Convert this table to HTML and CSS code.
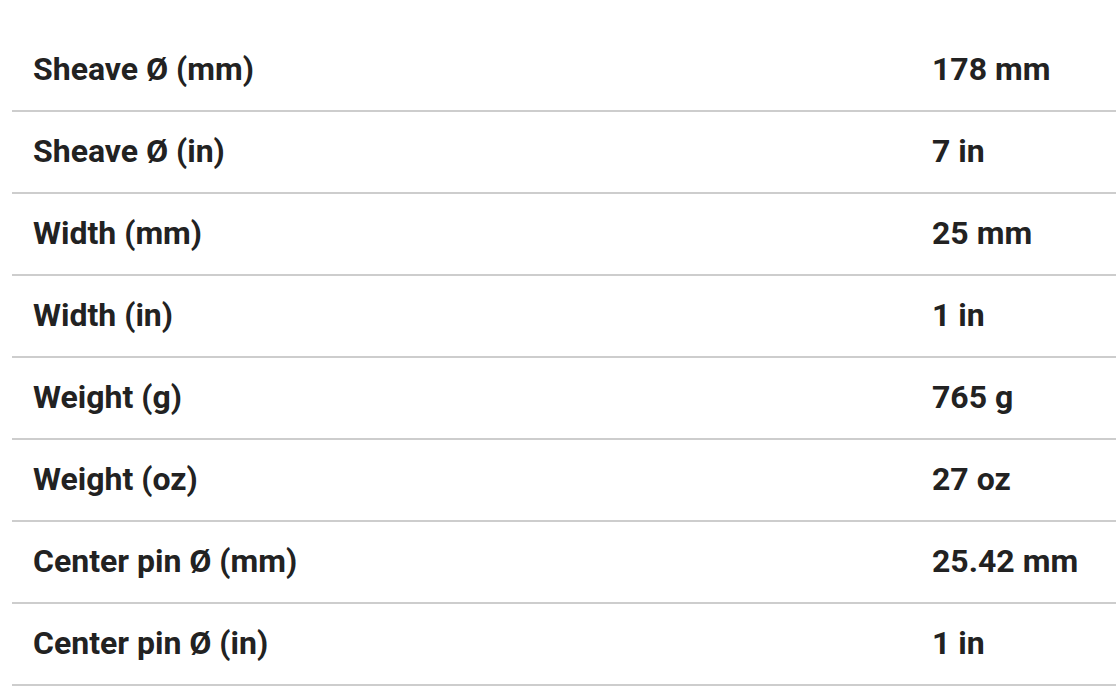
FILE: index.html
```html
<!DOCTYPE html>
<html>
<head>
<meta charset="utf-8">
<link rel="stylesheet" href="styles.css">
</head>
<body>
<table class="specs">
<colgroup><col class="col-k"><col class="col-v"></colgroup>
<tbody>
<tr><td class="k">Sheave Ø (mm)</td><td class="v">178 mm</td></tr>
<tr><td class="k">Sheave Ø (in)</td><td class="v">7 in</td></tr>
<tr><td class="k">Width (mm)</td><td class="v">25 mm</td></tr>
<tr><td class="k">Width (in)</td><td class="v">1 in</td></tr>
<tr><td class="k">Weight (g)</td><td class="v">765 g</td></tr>
<tr><td class="k">Weight (oz)</td><td class="v">27 oz</td></tr>
<tr><td class="k">Center pin Ø (mm)</td><td class="v">25.42 mm</td></tr>
<tr><td class="k">Center pin Ø (in)</td><td class="v">1 in</td></tr>
</tbody>
</table>
</body>
</html>
```
FILE: styles.css
```css
html, body {
  margin: 0;
  background: #fff;
  overflow: hidden;
}
body {
  padding: 30px 0 0 12px;
  font-family: Roboto, "Liberation Sans", sans-serif;
}
.specs {
  width: 1104px;
  border-collapse: collapse;
  table-layout: fixed;
}
.col-k {
  width: 899px;
}
.col-v {
  width: 205px;
}
.specs td {
  height: 78px;
  padding: 0 0 2px 21px;
  border-bottom: 2px solid #cdcdcd;
  font-size: 32px;
  font-weight: 700;
  color: #222;
  vertical-align: middle;
  white-space: nowrap;
}
```
